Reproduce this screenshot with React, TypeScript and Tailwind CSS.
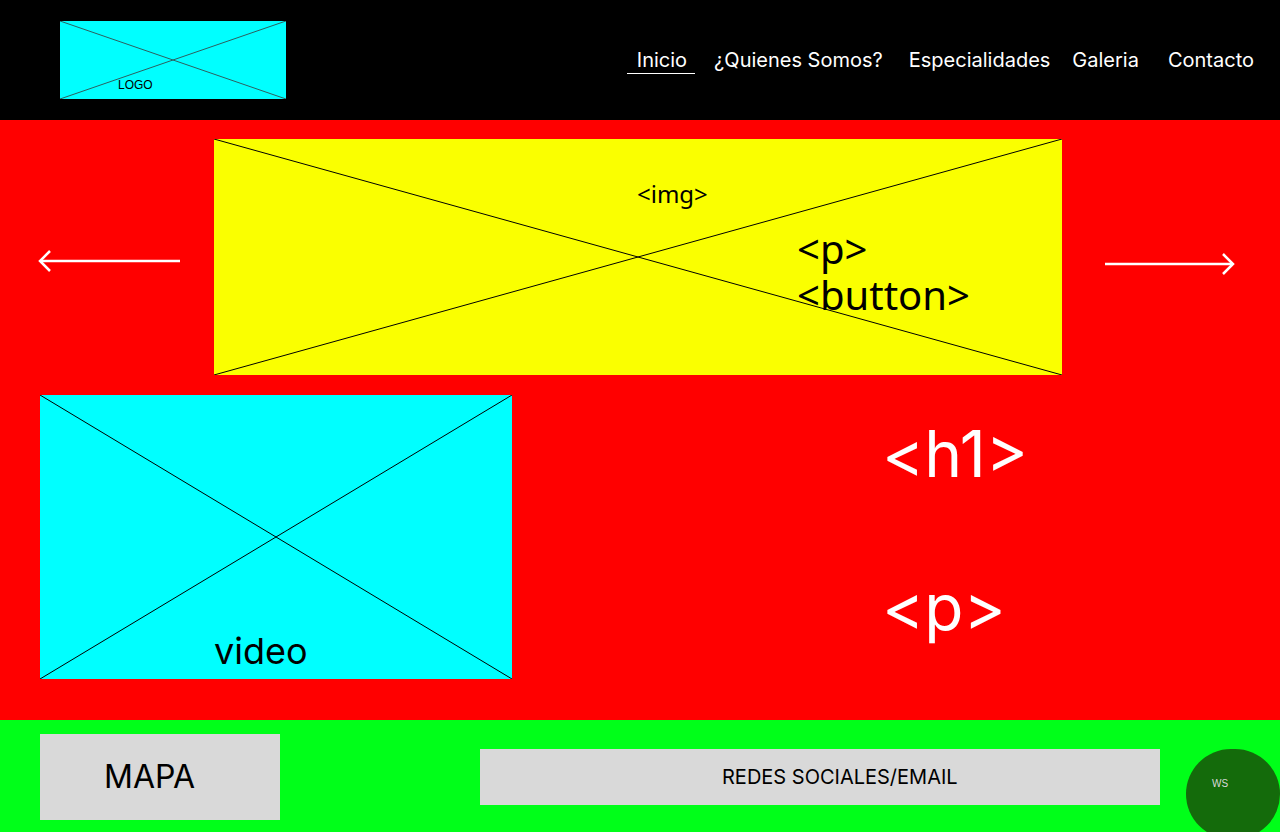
import React from "react"

function Cross({ color = "#000" }: { color?: string }) {
  return (
    <svg
      className="absolute inset-0 h-full w-full"
      viewBox="0 0 100 100"
      preserveAspectRatio="none"
    >
      <line x1="0" y1="0" x2="100" y2="100" stroke={color} strokeWidth="1" vectorEffect="non-scaling-stroke" />
      <line x1="100" y1="0" x2="0" y2="100" stroke={color} strokeWidth="1" vectorEffect="non-scaling-stroke" />
    </svg>
  )
}

function Arrow({ dir }: { dir: "left" | "right" }) {
  const w = dir === "left" ? 146 : 132
  return (
    <svg width={w} height="28" viewBox={`0 0 ${w} 28`} fill="none" stroke="#fff" strokeWidth="2.5">
      {dir === "left" ? (
        <>
          <line x1="2" y1="14" x2={w - 4} y2="14" />
          <polyline points="12,4 2,14 12,24" />
        </>
      ) : (
        <>
          <line x1="2" y1="14" x2={w - 2} y2="14" />
          <polyline points={`${w - 12},4 ${w - 2},14 ${w - 12},24`} />
        </>
      )}
    </svg>
  )
}

export default function App() {
  return (
    <div className="h-[832px] w-[1280px] overflow-hidden bg-white font-['Inter',sans-serif]">
      {/* HEADER */}
      <header className="flex h-[120px] items-center bg-black">
        <div className="relative ml-[60px] mt-[-1px] h-[78px] w-[226px] bg-[#00ffff]">
          <Cross color="#2d5f5f" />
          <span className="absolute left-[58px] top-[58px] font-['Liberation_Sans',sans-serif] text-[12px] leading-none text-black">
            LOGO
          </span>
        </div>
        <nav className="ml-auto mr-[26px] flex items-center text-[20px] leading-none text-white">
          <a className="border-b border-white pb-[3px] pl-[10px] pr-[8px] pt-[4px]">Inicio</a>
          <a className="ml-[19px]">¿Quienes Somos?</a>
          <a className="ml-[26px]">Especialidades</a>
          <a className="ml-[22px]">Galeria</a>
          <a className="ml-[29px]">Contacto</a>
        </nav>
      </header>

      {/* HERO */}
      <section className="h-[600px] bg-[#ff0000] pt-[19px]">
        <div className="flex items-start">
          <div className="ml-[38px] mt-[108px]">
            <Arrow dir="left" />
          </div>
          <div className="relative ml-[30px] h-[236px] w-[848px] bg-[#faff00]">
            <Cross />
            <div className="relative flex flex-col pl-[423px] pt-[41px] font-['Noto_Sans',sans-serif] text-black">
              <span className="text-[24px] leading-[28px]">&lt;img&gt;</span>
              <div className="ml-[160px] mt-[18px] text-[40px] leading-[46px]">
                <p>&lt;p&gt;</p>
                <p>&lt;button&gt;</p>
              </div>
            </div>
          </div>
          <div className="ml-[41px] mt-[111px]">
            <Arrow dir="right" />
          </div>
        </div>

        <div className="mt-[20px] flex items-start">
          <div className="relative ml-[40px] flex h-[284px] w-[472px] flex-col justify-end bg-[#00ffff]">
            <Cross />
            <span className="relative mb-[6px] ml-[174px] text-[36px] leading-[44px] text-black">video</span>
          </div>
          <div className="ml-[370px] flex flex-col pt-[27px] text-[64px] leading-[64px] text-white">
            <h1>&lt;h1&gt;</h1>
            <p className="mt-[89px]">&lt;p&gt;</p>
          </div>
        </div>
      </section>

      {/* FOOTER */}
      <footer className="flex h-[112px] items-center bg-[#00ff19]">
        <div className="ml-[40px] mt-[2px] flex h-[86px] w-[240px] items-center bg-[#d9d9d9] pl-[64px]">
          <span className="text-[32px] leading-none text-black">MAPA</span>
        </div>
        <div className="ml-[200px] mt-[2px] flex h-[56px] w-[680px] items-center bg-[#d9d9d9] pl-[242px]">
          <span className="text-[20px] leading-none text-black">REDES SOCIALES/EMAIL</span>
        </div>
        <div className="ml-[26px] mt-[29px] flex h-[90px] w-[94px] shrink-0 items-start self-start rounded-full bg-[#146b0b] pl-[26px] pt-[30px]">
          <span className="font-['Liberation_Sans',sans-serif] text-[10px] leading-none text-[#d9d9d9]">WS</span>
        </div>
      </footer>
    </div>
  )
}
